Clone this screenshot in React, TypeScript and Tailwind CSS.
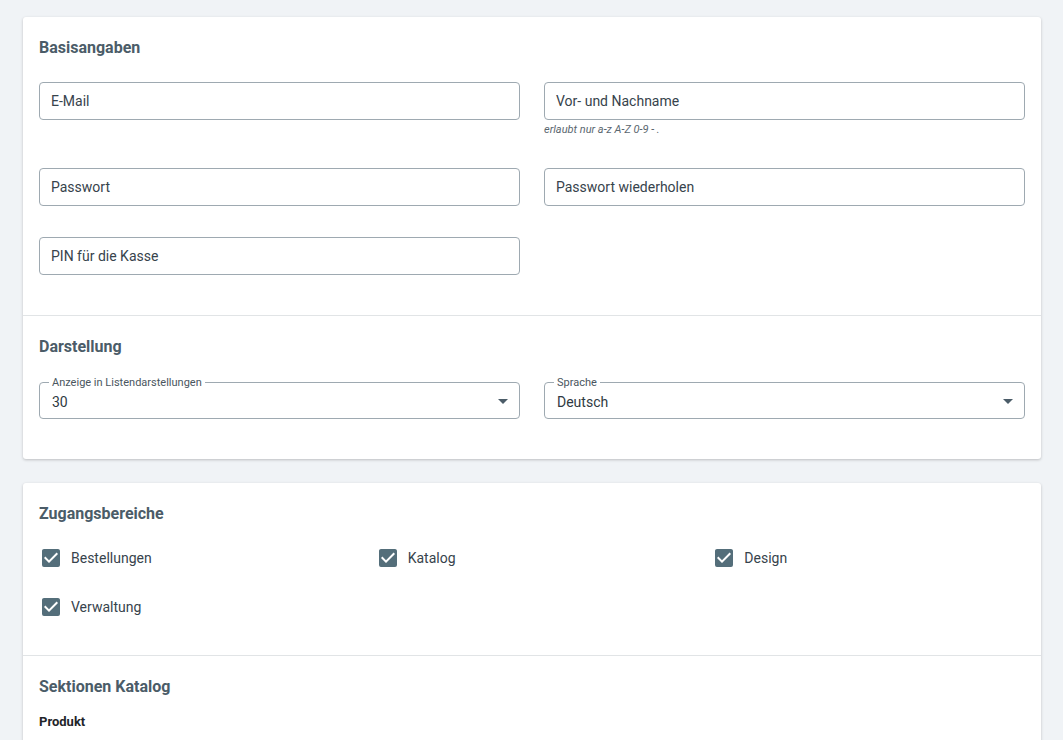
import { ReactNode } from "react";

const FONT = { fontFamily: "Roboto, 'Noto Sans', sans-serif" };

function Card({ children }: { children: ReactNode }) {
  return (
    <div className="rounded-[3px] bg-white shadow-[0_1px_3px_rgba(0,0,0,0.22)]">
      {children}
    </div>
  );
}

function Heading({ children }: { children: ReactNode }) {
  return <h2 className="h-6 text-base font-bold leading-6 text-[#4b5c68]">{children}</h2>;
}

function Field({ label, hint }: { label: string; hint?: string }) {
  return (
    <div>
      <div className="flex h-[38px] items-center rounded-[4px] border border-[#9ea9b1] pl-[11px] pr-3 text-sm text-[#37434c]">
        {label}
      </div>
      {hint && (
        <div className="h-[17px] pt-1 text-[11px] italic leading-[12px] text-[#5b6770]">{hint}</div>
      )}
    </div>
  );
}

function SelectBox({ label, value }: { label: string; value: string }) {
  return (
    <div className="relative flex h-[37px] items-center justify-between rounded-[4px] border border-[#9ea9b1] pl-3 pr-[4px] text-sm text-[#2f3a42]">
      <span className="absolute -top-[7px] left-[9px] bg-white px-[3px] text-[11px] leading-[13px] text-[#4a5660]">
        {label}
      </span>
      <span className="pt-[2px]">{value}</span>
      <svg width="24" height="24" viewBox="0 0 24 24" className="text-[#4b5c68]">
        <path d="M7,10L12,15L17,10H7Z" fill="currentColor" />
      </svg>
    </div>
  );
}

function Check({ label }: { label: string }) {
  return (
    <div className="flex h-6 items-center gap-2 text-sm text-[#37434c]">
      <svg width="24" height="24" viewBox="0 0 24 24" className="text-[#546e7a]">
        <path
          d="M10,17L5,12L6.41,10.58L10,14.17L17.59,6.58L19,8M19,3H5C3.89,3 3,3.89 3,5V19A2,2 0 0,0 5,21H19A2,2 0 0,0 21,19V5C21,3.89 20.1,3 19,3Z"
          fill="currentColor"
        />
      </svg>
      {label}
    </div>
  );
}

export default function App() {
  return (
    <div className="min-h-screen bg-[#f0f3f6] pl-[23px] pr-[22px] pt-[17px]" style={FONT}>
      <div className="flex flex-col gap-6">
        <Card>
          <section className="px-4 pb-10 pt-[19px]">
            <Heading>Basisangaben</Heading>
            <div className="mt-[22px] grid grid-cols-2 items-start gap-x-6 gap-y-[31px]">
              <Field label="E-Mail" />
              <Field label="Vor- und Nachname" hint="erlaubt nur a-z A-Z 0-9 - ." />
              <Field label="Passwort" />
              <Field label="Passwort wiederholen" />
              <Field label="PIN für die Kasse" />
            </div>
          </section>
          <section className="border-t border-[#e1e4e6] px-4 pb-10 pt-[19px]">
            <Heading>Darstellung</Heading>
            <div className="mt-[23px] grid grid-cols-2 gap-x-6">
              <SelectBox label="Anzeige in Listendarstellungen" value="30" />
              <SelectBox label="Sprache" value="Deutsch" />
            </div>
          </section>
        </Card>

        <Card>
          <section className="px-4 pb-9 pt-[19px]">
            <Heading>Zugangsbereiche</Heading>
            <div className="mt-5 grid grid-cols-3 gap-x-6 gap-y-[25px]">
              <Check label="Bestellungen" />
              <Check label="Katalog" />
              <Check label="Design" />
              <Check label="Verwaltung" />
            </div>
          </section>
          <section className="border-t border-[#e1e4e6] px-4 pb-6 pt-[19px]">
            <Heading>Sektionen Katalog</Heading>
            <div className="mt-[13px] text-[13px] font-bold leading-5 text-[#1f2529]">Produkt</div>
            <div className="mt-[8px] flex justify-end pr-[19px]">
              <div className="relative h-5 w-[36px]">
                <div className="absolute left-0 top-[3px] h-[14px] w-[36px] rounded-full bg-[#a5d6a7]" />
                <div className="absolute right-[1px] top-0 h-5 w-5 rounded-full bg-[#4caf50]" />
              </div>
            </div>
          </section>
        </Card>
      </div>
    </div>
  );
}
